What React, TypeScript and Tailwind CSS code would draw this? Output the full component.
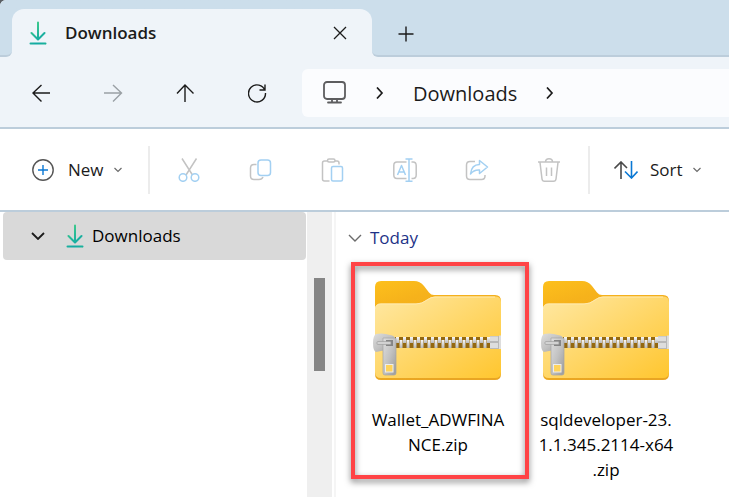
import React from "react";

const openSans = "font-['Open_Sans','Noto_Sans',sans-serif]";

function DownloadIcon({ id }: { id: string }) {
  return (
    <svg width="18" height="24" viewBox="0 0 18 24" fill="none" strokeWidth="2" strokeLinecap="round" strokeLinejoin="round" aria-hidden="true">
      <defs>
        <linearGradient id={id} x1="0" y1="0" x2="18" y2="24" gradientUnits="userSpaceOnUse">
          <stop offset="0.2" stopColor="#3cc98c" />
          <stop offset="0.75" stopColor="#12a9a4" />
          <stop offset="1" stopColor="#1fb597" />
        </linearGradient>
      </defs>
      <path d="M9 1.5V18M2.5 12L9 18.5L15.5 12M1.5 22.5H16.5L16.4 22.6" stroke={`url(#${id})`} />
    </svg>
  );
}

function Chevron({ dir, size, stroke, width }: { dir: "right" | "down"; size: "sm" | "md"; stroke: string; width: number }) {
  if (dir === "right") {
    return (
      <svg width="8" height="12" viewBox="0 0 8 12" fill="none" stroke={stroke} strokeWidth={width} aria-hidden="true">
        <path d="M1 0.500L6 6L1 11.500" />
      </svg>
    );
  }
  return size === "sm" ? (
    <svg width="8" height="6" viewBox="0 0 8 6" fill="none" stroke={stroke} strokeWidth={width} aria-hidden="true">
      <path d="M0.500 1L4 4.500L7.500 1" />
    </svg>
  ) : (
    <svg width="14" height="8" viewBox="0 0 14 8" fill="none" stroke={stroke} strokeWidth={width} aria-hidden="true">
      <path d="M1 1L7 7L13 1" />
    </svg>
  );
}

function ZipFolder({ id }: { id: string }) {
  const teeth = Array.from({ length: 14 }, (_, i) => 22 + i * 7);
  return (
    <svg width="130" height="100" viewBox="0 0 130 100" className="shrink-0" aria-hidden="true">
      <defs>
        <linearGradient id={`${id}-back`} x1="0" y1="0" x2="0.4" y2="1">
          <stop offset="0" stopColor="#fdc01c" />
          <stop offset="0.25" stopColor="#f6b21b" />
          <stop offset="1" stopColor="#e9a523" />
        </linearGradient>
        <linearGradient id={`${id}-front`} x1="0" y1="0" x2="1" y2="1">
          <stop offset="0" stopColor="#ffe8a3" />
          <stop offset="1" stopColor="#ffc62f" />
        </linearGradient>
        <linearGradient id={`${id}-metal`} x1="0" y1="0" x2="1" y2="1">
          <stop offset="0" stopColor="#dedede" />
          <stop offset="0.5" stopColor="#c2c2c2" />
          <stop offset="1" stopColor="#999999" />
        </linearGradient>
        <linearGradient id={`${id}-tooth`} x1="0" y1="0" x2="0" y2="1">
          <stop offset="0" stopColor="#f8f8f8" />
          <stop offset="1" stopColor="#b9b9b9" />
        </linearGradient>
        <clipPath id={`${id}-clip`}>
          <rect x="22" y="56" width="95" height="11" />
        </clipPath>
      </defs>
      <path d="M2 6Q2 0 8 0H41Q47 0 51 5L56 11.500Q58 14 61 14H122Q128 14 128 20V93Q128 99 122 99H8Q2 99 2 93Z" fill={`url(#${id}-back)`} />
      <path d="M2 28Q2 22.500 8 22.500H43Q49 22.500 54 18.500Q58 15.500 62 15.500H123Q128 16 128 21V91Q128 97 122 97H8Q2 97 2 91Z" fill={`url(#${id}-front)`} />
      <path d="M2.500 28Q2.500 23 8 23H43Q49 23 54 19Q58 16 62 16H122" fill="none" stroke="#ffe9ae" strokeWidth="1" />
      <rect x="22" y="56" width="95" height="11" fill="#94680f" />
      <g clipPath={`url(#${id}-clip)`} fill={`url(#${id}-tooth)`}>
        {teeth.map((x) => (
          <React.Fragment key={x}>
            <path d={`M${x + 1} 56h3v6h-3z`} />
            <path d={`M${x + 4.5} 59h3v8h-3z`} />
          </React.Fragment>
        ))}
      </g>
      <rect x="117" y="55" width="11" height="13" fill="#b8b8b8" />
      <path d="M117 55.500H125V60H117ZM117 62H125V67H117ZM126 54.500H128V68H126Z" fill="#dddddd" />
      <path d="M3 53Q10 51.500 17 54Q22 54.500 22 58V66Q20 68 13 69L3 71Q0 70 0 62Q0 55 3 53Z" fill={`url(#${id}-metal)`} />
      <path d="M10 57H22Q23 57 23 58V92Q23 94 21 94H12Q10 94 10 92Z" fill={`url(#${id}-metal)`} stroke="#a5a5a5" strokeWidth="0.700" />
      <rect x="13" y="59" width="7" height="6" fill="#858585" />
      <rect x="4" y="60.500" width="14" height="3" rx="1" fill="#d2d2d2" stroke="#999999" strokeWidth="0.600" />
      <rect x="12.500" y="83.500" width="7.500" height="7.500" fill="#ffd35a" stroke="#ededed" strokeWidth="1" />
    </svg>
  );
}

const navIcons = [
  { label: "Back", stroke: "#1b1b1b", d: "M18 9H1M9.500 1L1 9L9.500 17.500" },
  { label: "Forward", stroke: "#9aa0a5", d: "M0 9H17.500M9 1L17.500 9L9 17.500" },
  { label: "Up", stroke: "#1b1b1b", d: "M9 18V1M1 9.500L9 1L17.500 9.500" },
  { label: "Refresh", stroke: "#1b1b1b", d: "M17 6.500A8.500 8.500 0 1 0 17.500 9M17 0.500V6H11.500" },
];

const G = "#c3c3c3";
const B = "#a3d0f2";

const tools: { label: string; art: React.ReactNode }[] = [
  {
    label: "Cut",
    art: (
      <>
        <path d="M5 0.500L15.500 17M19.500 0.500L9 17" stroke={G} />
        <circle cx="6" cy="19.500" r="3.800" stroke={B} fill="white" />
        <circle cx="18" cy="19.500" r="3.800" stroke={B} fill="white" />
      </>
    ),
  },
  {
    label: "Copy",
    art: (
      <>
        <path d="M7.500 6.500H5Q1.500 6.500 1.500 10V18Q1.500 21.500 5 21.500H10Q13 21.500 14 19" stroke={G} />
        <rect x="9" y="2" width="12.500" height="15.500" rx="3" stroke={B} />
      </>
    ),
  },
  {
    label: "Paste",
    art: (
      <>
        <path d="M6.500 3H3.500Q1.500 3 1.500 5V21.300Q1.500 23 3.500 23H8.500M14 3H16Q18 3 18 5V6.500" stroke={G} />
        <rect x="6.500" y="1" width="7.500" height="3" rx="1.500" stroke={G} />
        <rect x="10.500" y="8.500" width="11" height="14.500" rx="1.500" stroke={B} />
      </>
    ),
  },
  {
    label: "Rename",
    art: (
      <>
        <path d="M13.500 4H4Q0.800 4 0.800 7.500V17Q0.800 20.500 4 20.500H13.500M18.500 4H20Q23.200 4 23.200 7.500V17Q23.200 20.500 20 20.500H18.500" stroke={G} />
        <path d="M4.500 17L8.500 7.500L12.500 17M5.800 14H11.200M12.500 1H19.500M12.500 23.200H19.500M16 1V23" stroke={B} />
      </>
    ),
  },
  {
    label: "Share",
    art: (
      <>
        <path d="M10 3.500H5Q1.500 3.500 1.500 7V18Q1.500 21.500 5 21.500H16.500Q20 21.500 20 18V17" stroke={G} />
        <path d="M14.500 2.500L22.500 9L14.500 15.500V12Q9 11.500 5.500 16Q6.500 6.500 14.500 6.500Z" stroke={B} />
      </>
    ),
  },
  {
    label: "Delete",
    art: <path d="M1 4H23M8.500 4Q8.500 0.800 12 0.800Q15.500 0.800 15.500 4M3 4.500L5 21Q5.300 23.200 7.500 23.200H16.500Q18.700 23.200 19 21L21 4.500M9.500 9.500V18M14.500 9.500V18" stroke={G} />,
  },
];

const files = [
  { id: "wallet", lines: ["Wallet_ADWFINA", "NCE.zip"], marked: true },
  { id: "sqldev", lines: ["sqldeveloper-23.", "1.1.345.2114-x64", ".zip"], marked: false },
];

export default function App() {
  return (
    <div className={`flex h-screen flex-col overflow-hidden bg-white text-[#1b1b1b] ${openSans}`}>
      <div className="shrink-0 bg-[#5a5f64]">
        <header className="overflow-hidden rounded-tl-md border-b-2 border-[#bccddb] bg-[#eff4f9]">
          <div className="flex h-[57px]">
            <div className="w-3 shrink-0 rounded-br-md border-b-2 border-[#bccddb] bg-[#ccdeeb]" />
            <div className="w-[360px] shrink-0 bg-linear-to-b from-[#ccdeeb] from-50% to-[#eff4f9] to-50% pt-[9px]">
              <div className="flex h-12 items-center rounded-t-xl bg-[#eff4f9] pr-[22px] pl-[17px]">
                <DownloadIcon id="tab-dl" />
                <span className="ml-[18px] flex-1 text-[17px] font-semibold">Downloads</span>
                <button type="button" aria-label="Close tab" className="flex size-5 items-center justify-center">
                  <svg width="14" height="14" viewBox="0 0 14 14" stroke="#1b1b1b" strokeWidth="1.300" aria-hidden="true">
                    <path d="M1 1L13 13M13 1L1 13" />
                  </svg>
                </button>
              </div>
            </div>
            <div className="flex flex-1 items-center rounded-bl-md border-b-2 border-[#bccddb] bg-[#ccdeeb] pt-3 pl-[22px]">
              <button type="button" aria-label="New tab" className="flex size-6 items-center justify-center">
                <svg width="16" height="16" viewBox="0 0 16 16" stroke="#1b1b1b" strokeWidth="1.400" aria-hidden="true">
                  <path d="M8 0.500V15.500M0.500 8H15.500" />
                </svg>
              </button>
            </div>
          </div>
          <nav className="flex h-[70px] items-center pt-0.5 pl-[5px]">
            {navIcons.map((n) => (
              <button key={n.label} type="button" aria-label={n.label} className="flex h-12 w-[72px] shrink-0 items-center justify-center">
                <svg width="19" height="19" viewBox="0 0 19 19" fill="none" stroke={n.stroke} strokeWidth="1.400" aria-hidden="true">
                  <path d={n.d} />
                </svg>
              </button>
            ))}
            <div className="ml-[9px] flex h-12 flex-1 items-center rounded-l-md bg-[#fbfcfe] pl-[21px]">
              <svg width="23" height="24" viewBox="0 0 23 24" fill="none" stroke="#5d5d5f" strokeWidth="1.800" strokeLinecap="round" aria-hidden="true">
                <rect x="1" y="1" width="21" height="17" rx="3" />
                <path d="M9 18V21M14 18V21M5 21.500H18" />
              </svg>
              <span className="ml-[30px]"><Chevron dir="right" size="md" stroke="#1b1b1b" width={1.7} /></span>
              <button type="button" className="mx-[29px] pt-0.5 text-xl">Downloads</button>
              <Chevron dir="right" size="md" stroke="#1b1b1b" width={1.7} />
            </div>
          </nav>
        </header>
      </div>

      <div className="flex h-[83px] shrink-0 items-center border-b-2 border-[#bccddb] pt-px pl-8">
        <button type="button" className="flex h-12 w-[116px] shrink-0 items-center text-[17px]">
          <svg width="22" height="22" viewBox="0 0 22 22" fill="none" aria-hidden="true">
            <circle cx="11" cy="11" r="10.200" stroke="#555555" strokeWidth="1.400" />
            <path d="M11 6V16M6 11H16" stroke="#0a78d4" strokeWidth="1.400" />
          </svg>
          <span className="mr-2.5 ml-3.5">New</span>
          <Chevron dir="down" size="sm" stroke="#6b6b6b" width={1.2} />
        </button>
        <div className="h-12 w-0.5 shrink-0 bg-[#ececec]" />
        <div className="flex pr-[3px] pl-[3px]">
          {tools.map((t) => (
            <button key={t.label} type="button" aria-label={t.label} className="flex h-12 w-[72px] shrink-0 items-center justify-center">
              <svg width="24" height="24" viewBox="0 0 24 24" fill="none" strokeWidth="1.500" strokeLinejoin="round" aria-hidden="true">
                {t.art}
              </svg>
            </button>
          ))}
        </div>
        <div className="h-12 w-0.5 shrink-0 bg-[#ececec]" />
        <button type="button" className="ml-6 flex h-12 items-center text-[17px]">
          <svg width="24" height="18" viewBox="0 0 24 18" fill="none" strokeWidth="1.600" aria-hidden="true">
            <path d="M7 18V1M0.500 7.500L7 1L13 7" stroke="#4a4a4a" />
            <path d="M17.500 0V17M11 10.500L17.500 17L23.500 10.500" stroke="#0a78d4" />
          </svg>
          <span className="mr-2.5 ml-3">Sort</span>
          <Chevron dir="down" size="sm" stroke="#6b6b6b" width={1.2} />
        </button>
      </div>

      <div className="flex min-h-0 flex-1">
        <aside className="w-[307px] shrink-0 pr-px pl-[3px]">
          <button type="button" className="flex h-12 w-full items-center rounded-sm bg-[#d9d9d9] pl-7 text-[17px] text-black">
            <Chevron dir="down" size="md" stroke="#1b1b1b" width={1.8} />
            <span className="mr-2 ml-[21px]"><DownloadIcon id="side-dl" /></span>
            Downloads
          </button>
        </aside>
        <div className="w-[25px] shrink-0 bg-[#efefef] pt-[66px] pl-[7px]">
          <div className="h-[93px] w-[11px] bg-[#858585]" />
        </div>
        <main className="ml-0.5 flex-1 border-l-2 border-[#f5f5f5] pl-3">
          <button type="button" className="flex h-[50px] items-center pt-0.5 text-[17px] text-[#1e3287]">
            <Chevron dir="down" size="md" stroke="#6b6b6b" width={1.4} />
            <span className="ml-2">Today</span>
          </button>
          <div className="flex items-start pl-[3px]">
            {files.map((f) => (
              <div
                key={f.id}
                className={
                  f.marked
                    ? "relative flex h-[217px] w-[178px] shrink-0 flex-col items-center pt-[19px] pr-1"
                    : "flex w-[154px] shrink-0 flex-col items-center pt-[19px]"
                }
              >
                {f.marked && (
                  <div className="pointer-events-none absolute inset-0 border-4 border-[#ff4345] drop-shadow-[0_3px_3px_rgba(0,0,0,0.5)]" />
                )}
                <ZipFolder id={f.id} />
                <span className="mt-[26px] text-center text-[17px] leading-[25px] text-black">
                  {f.lines.map((l) => (
                    <span key={l} className="block">{l}</span>
                  ))}
                </span>
              </div>
            ))}
          </div>
        </main>
      </div>
    </div>
  );
}
